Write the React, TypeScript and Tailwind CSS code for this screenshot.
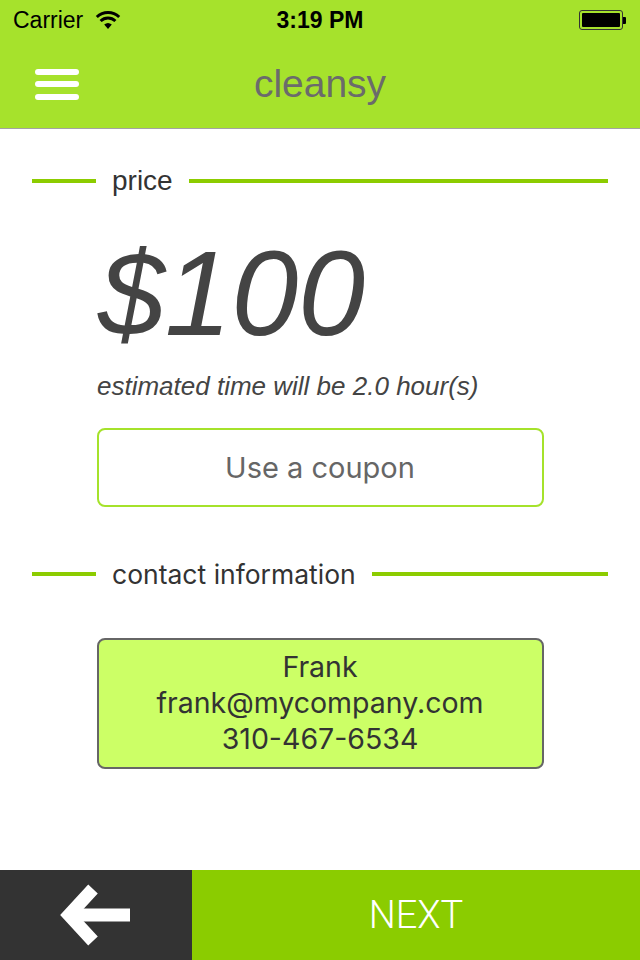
import React from 'react';

const SectionTitle = ({ label, size }: { label: string; size: string }) => {
  return <div className="flex items-center px-8">
      <div className="h-1 w-16 bg-[#8ccc00]" />
      <span className={`px-4 leading-none text-[#333] ${size}`}>
        {label}
      </span>
      <div className="h-1 flex-1 bg-[#8ccc00]" />
    </div>;
};

const Wifi = () => <svg width="26" height="20" viewBox="0 0 26 20" className="ml-3">
    <path d="M13 19 L9.2 14.6 A5.8 5.8 0 0 1 16.8 14.6 Z" fill="#000" />
    <path d="M5.6 11 A10.8 10.8 0 0 1 20.4 11" stroke="#000" strokeWidth="3" fill="none" />
    <path d="M1.8 7 A16.5 16.5 0 0 1 24.2 7" stroke="#000" strokeWidth="3" fill="none" />
  </svg>;

const Battery = () => <div className="flex items-center">
    <div className="w-[44px] h-[20px] rounded-[3px] border border-[#333] p-[2px]">
      <div className="w-full h-full rounded-[1px] bg-black" />
    </div>
    <div className="w-[3px] h-[7px] bg-black rounded-r-[1px]" />
  </div>;

const BackArrow = () => <svg width="72" height="62" viewBox="0 0 72 62">
    <polyline points="33,5 9,31 33,57" fill="none" stroke="#fff" strokeWidth="13" strokeLinejoin="miter" strokeLinecap="butt" />
    <line x1="10" y1="31" x2="70" y2="31" stroke="#fff" strokeWidth="13" />
  </svg>;

export default function App() {
  return <div className="flex flex-col h-[960px] w-[640px] bg-white overflow-hidden">
      {/* header */}
      <div className="bg-[#a6e22c] border-b border-[#a3a3a3]">
        <div className="relative flex items-center justify-between h-10 px-[13px] font-['Liberation_Sans',Arial,sans-serif] text-black">
          <div className="flex items-center text-[23px]">
            Carrier
            <Wifi />
          </div>
          <div className="absolute left-1/2 -translate-x-1/2 text-[23px] font-bold">
            3:19 PM
          </div>
          <div className="pr-[1px]">
            <Battery />
          </div>
        </div>
        <div className="relative flex items-center h-[88px] px-[35px]">
          <div className="flex flex-col gap-[6.5px]">
            <div className="w-11 h-[6px] rounded-full bg-white" />
            <div className="w-11 h-[6px] rounded-full bg-white" />
            <div className="w-11 h-[6px] rounded-full bg-white" />
          </div>
          <div className="absolute left-1/2 -translate-x-1/2 text-[39px] text-[#6b6b6b] font-['Liberation_Sans',Arial,sans-serif]">
            cleansy
          </div>
        </div>
      </div>

      {/* price */}
      <div className="mt-[38px]">
        <SectionTitle label="price" size="text-[28px] font-['Liberation_Sans',Arial,sans-serif]" />
      </div>
      <div className="mt-[38px] pl-[98px] text-[120px] leading-none italic text-[#444] font-['Liberation_Sans',Arial,sans-serif]">
        $100
      </div>
      <div className="mt-[20px] pl-[97px] text-[26px] leading-none italic text-[#444] font-['Liberation_Sans',Arial,sans-serif]">
        estimated time will be 2.0 hour(s)
      </div>
      <button type="button" className="mx-auto mt-[29px] w-[447px] h-[79px] rounded-lg border-2 border-[#a5e22b] bg-white text-[29px] text-[#666] font-['Inter',sans-serif]">
        Use a coupon
      </button>

      {/* contact */}
      <div className="mt-[54px]">
        <SectionTitle label="contact information" size="text-[26.5px] font-['Inter',sans-serif]" />
      </div>
      <div className="mx-auto mt-[50px] w-[447px] h-[131px] rounded-lg border-2 border-[#666] bg-[#ccff66] flex flex-col items-center justify-center text-[28.5px] leading-[36px] text-[#333] font-['Inter',sans-serif]">
        <div>Frank</div>
        <div>frank@mycompany.com</div>
        <div>310-467-6534</div>
      </div>

      <div className="flex-1" />

      {/* bottom bar */}
      <div className="flex h-[90px]">
        <button type="button" className="w-[192px] h-full bg-[#333] flex items-center justify-center">
          <BackArrow />
        </button>
        <button type="button" className="flex-1 h-full bg-[#8bcc00] text-white text-[38px] font-light font-['Roboto',sans-serif]">
          NEXT
        </button>
      </div>
    </div>;
}
